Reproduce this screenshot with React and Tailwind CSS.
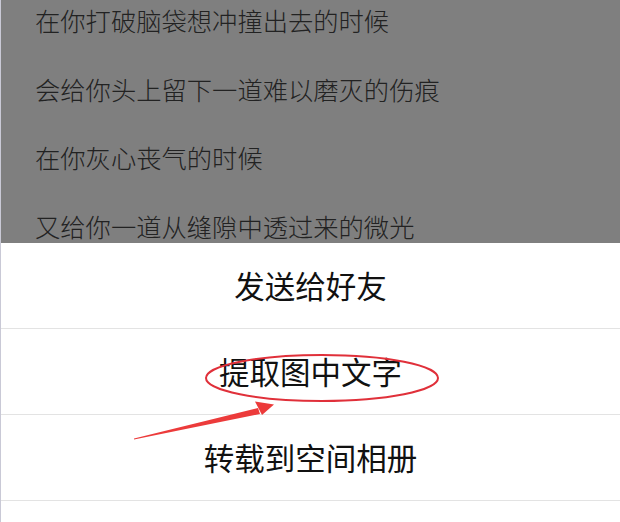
import React from "react";

const cjk = { fontFamily: '"Noto Sans CJK SC", "Noto Sans", sans-serif' };

export default function App() {
  const lines = [
    "在你打破脑袋想冲撞出去的时候",
    "会给你头上留下一道难以磨灭的伤痕",
    "在你灰心丧气的时候",
    "又给你一道从缝隙中透过来的微光",
  ];
  const items = ["发送给好友", "提取图中文字", "转载到空间相册"];
  return (
    <div className="relative w-[620px] h-[522px] overflow-hidden bg-white border-l border-[#c9c9d6]" style={cjk}>
      <div className="h-[243px] bg-[#7f7f7f] overflow-hidden">
        <div className="-mt-[14px] pl-[34px]">
          {lines.map((t) => (
            <div key={t} className="h-[68.5px] leading-[68.5px] text-[25.3px] font-light text-[#222222]">
              {t}
            </div>
          ))}
        </div>
      </div>
      <div className="flex flex-col">
        {items.map((t) => (
          <div key={t} className="h-[86px] flex items-center justify-center border-b border-[#e3e3e3] text-[30.5px] text-[#111]">
            {t}
          </div>
        ))}
        <div className="flex-1" />
      </div>
      <svg className="absolute left-0 top-0 pointer-events-none" width="620" height="522" viewBox="0 0 620 522">
        <ellipse cx="321" cy="378" rx="116" ry="23" fill="none" stroke="#e0303a" strokeWidth="2" />
        <polygon points="133,438.5 257,408 259,414 133,439.5" fill="#ec3b3b" />
        <polygon points="273,404.5 254,401.5 261,415" fill="#ec3b3b" />
      </svg>
    </div>
  );
}
